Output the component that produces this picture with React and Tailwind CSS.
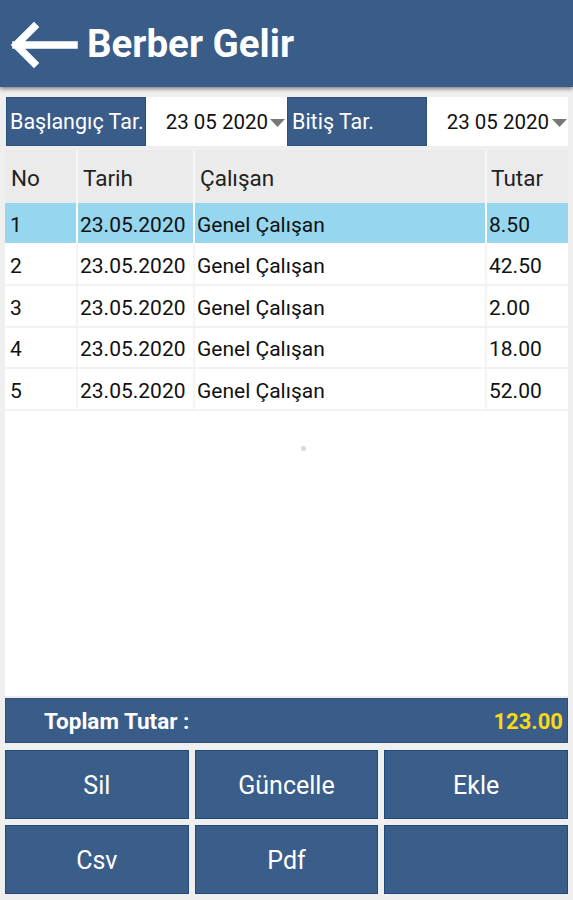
import React from "react";

const rows = [
  ["1", "23.05.2020", "Genel Çalışan", "8.50"],
  ["2", "23.05.2020", "Genel Çalışan", "42.50"],
  ["3", "23.05.2020", "Genel Çalışan", "2.00"],
  ["4", "23.05.2020", "Genel Çalışan", "18.00"],
  ["5", "23.05.2020", "Genel Çalışan", "52.00"],
];

function Caret() {
  return (
    <svg width="15" height="8" viewBox="0 0 15 8" className="shrink-0">
      <polygon points="0,0 15,0 7.5,8" fill="#777" />
    </svg>
  );
}

function Btn({ children }) {
  return (
    <div className="flex items-center justify-center bg-[#3b5d8a] border border-[#1e4b7c] text-white text-[25px] h-[69px] pt-[2px]">
      {children}
    </div>
  );
}

export default function App() {
  return (
    <div
      className="w-[573px] h-[900px] flex flex-col bg-[#efefef] overflow-hidden"
      style={{ fontFamily: "Roboto, 'Noto Sans', sans-serif" }}
    >
      {/* Header */}
      <div className="h-[87px] shrink-0 bg-[#3a5c89] flex items-center shadow-[0_2px_4px_rgba(0,0,0,0.45)] relative z-10">
        <svg width="68" height="48" viewBox="0 0 68 48" className="ml-[10px] mt-[2px]">
          <path
            d="M6 24 H64 M24 6 L6 24 L24 42"
            stroke="white"
            strokeWidth="7.5"
            fill="none"
            strokeLinecap="square"
          />
        </svg>
        <div className="ml-[9px] text-white font-bold text-[38.5px] leading-none mt-[2px]">Berber Gelir</div>
      </div>

      {/* Date row */}
      <div className="mt-[10px] mx-[6px] mr-[5px] h-[49px] flex bg-white shrink-0">
        <div className="w-[140px] bg-[#3a5c89] text-white text-[21.5px] flex items-center pl-[3px] pt-[1px] border border-[#2c4f7c] whitespace-nowrap">
          Başlangıç Tar.
        </div>
        <div className="w-[141px] flex items-center justify-end pr-[2px] pt-[1px] text-[20.5px] text-[#111]">
          <span>23 05 2020</span>
          <span className="ml-[2px] mt-[2px]"><Caret /></span>
        </div>
        <div className="w-[140px] bg-[#3a5c89] text-white text-[21.5px] flex items-center pl-[4px] pt-[1px] border border-[#2c4f7c]">
          Bitiş Tar.
        </div>
        <div className="flex-1 flex items-center justify-end pr-[1px] pt-[1px] text-[20.5px] text-[#111]">
          <span>23 05 2020</span>
          <span className="ml-[3px] mt-[2px]"><Caret /></span>
        </div>
      </div>

      {/* Table */}
      <div className="mt-[4px] mx-[5px] flex-1 bg-white flex flex-col relative">
        <div className="grid grid-cols-[73px_117px_292px_1fr] h-[53px] bg-[#ebebeb] text-[22.5px] text-[#222]">
          <div className="flex items-center pl-[6px] pt-[4px] border-r-2 border-[#f6f6f6]">No</div>
          <div className="flex items-center pl-[5px] pt-[4px] border-r-2 border-[#f6f6f6]">Tarih</div>
          <div className="flex items-center pl-[5px] pt-[4px] border-r-2 border-[#f6f6f6]">Çalışan</div>
          <div className="flex items-center pl-[4px] pt-[4px]">Tutar</div>
        </div>
        {rows.map((r, i) => (
          <div
            key={r[0]}
            className={
              "grid grid-cols-[73px_117px_292px_1fr] h-[41.5px] text-[21px] text-[#111] border-b-2 " +
              (i === 0 ? "bg-[#96d6ef] border-white" : "bg-white border-[#f2f2f2]")
            }
          >
            <div className={"flex items-center pl-[5px] pt-[5px] border-r-2 " + (i === 0 ? "border-white" : "border-[#f4f4f4]")}>{r[0]}</div>
            <div className={"flex items-center pl-[2px] pt-[5px] border-r-2 " + (i === 0 ? "border-white" : "border-[#f4f4f4]")}>{r[1]}</div>
            <div className={"flex items-center pl-[2px] pt-[5px] border-r-2 " + (i === 0 ? "border-white" : "border-[#f4f4f4]")}>{r[2]}</div>
            <div className="flex items-center pl-[2px] pt-[5px]">{r[3]}</div>
          </div>
        ))}
        <div className="absolute left-[296px] top-[296px] w-[5px] h-[5px] rounded-full bg-[#d8d8d8]" />
      </div>

      {/* Total bar */}
      <div className="mt-[2px] mx-[5px] h-[45px] shrink-0 bg-[#3a5c89] border border-[#2c4f7c] flex items-center justify-between pl-[38px] pr-[4px] pt-[2px]">
        <span className="text-white font-bold text-[22.5px]">Toplam Tutar :</span>
        <span className="text-[#f7d917] font-bold text-[22px]">123.00</span>
      </div>

      {/* Buttons */}
      <div className="mt-[7px] mb-[6px] mx-[5px] grid grid-cols-3 gap-x-[6px] gap-y-[6px] shrink-0">
        <Btn>Sil</Btn>
        <Btn>Güncelle</Btn>
        <Btn>Ekle</Btn>
        <Btn>Csv</Btn>
        <Btn>Pdf</Btn>
        <Btn>{""}</Btn>
      </div>
    </div>
  );
}
